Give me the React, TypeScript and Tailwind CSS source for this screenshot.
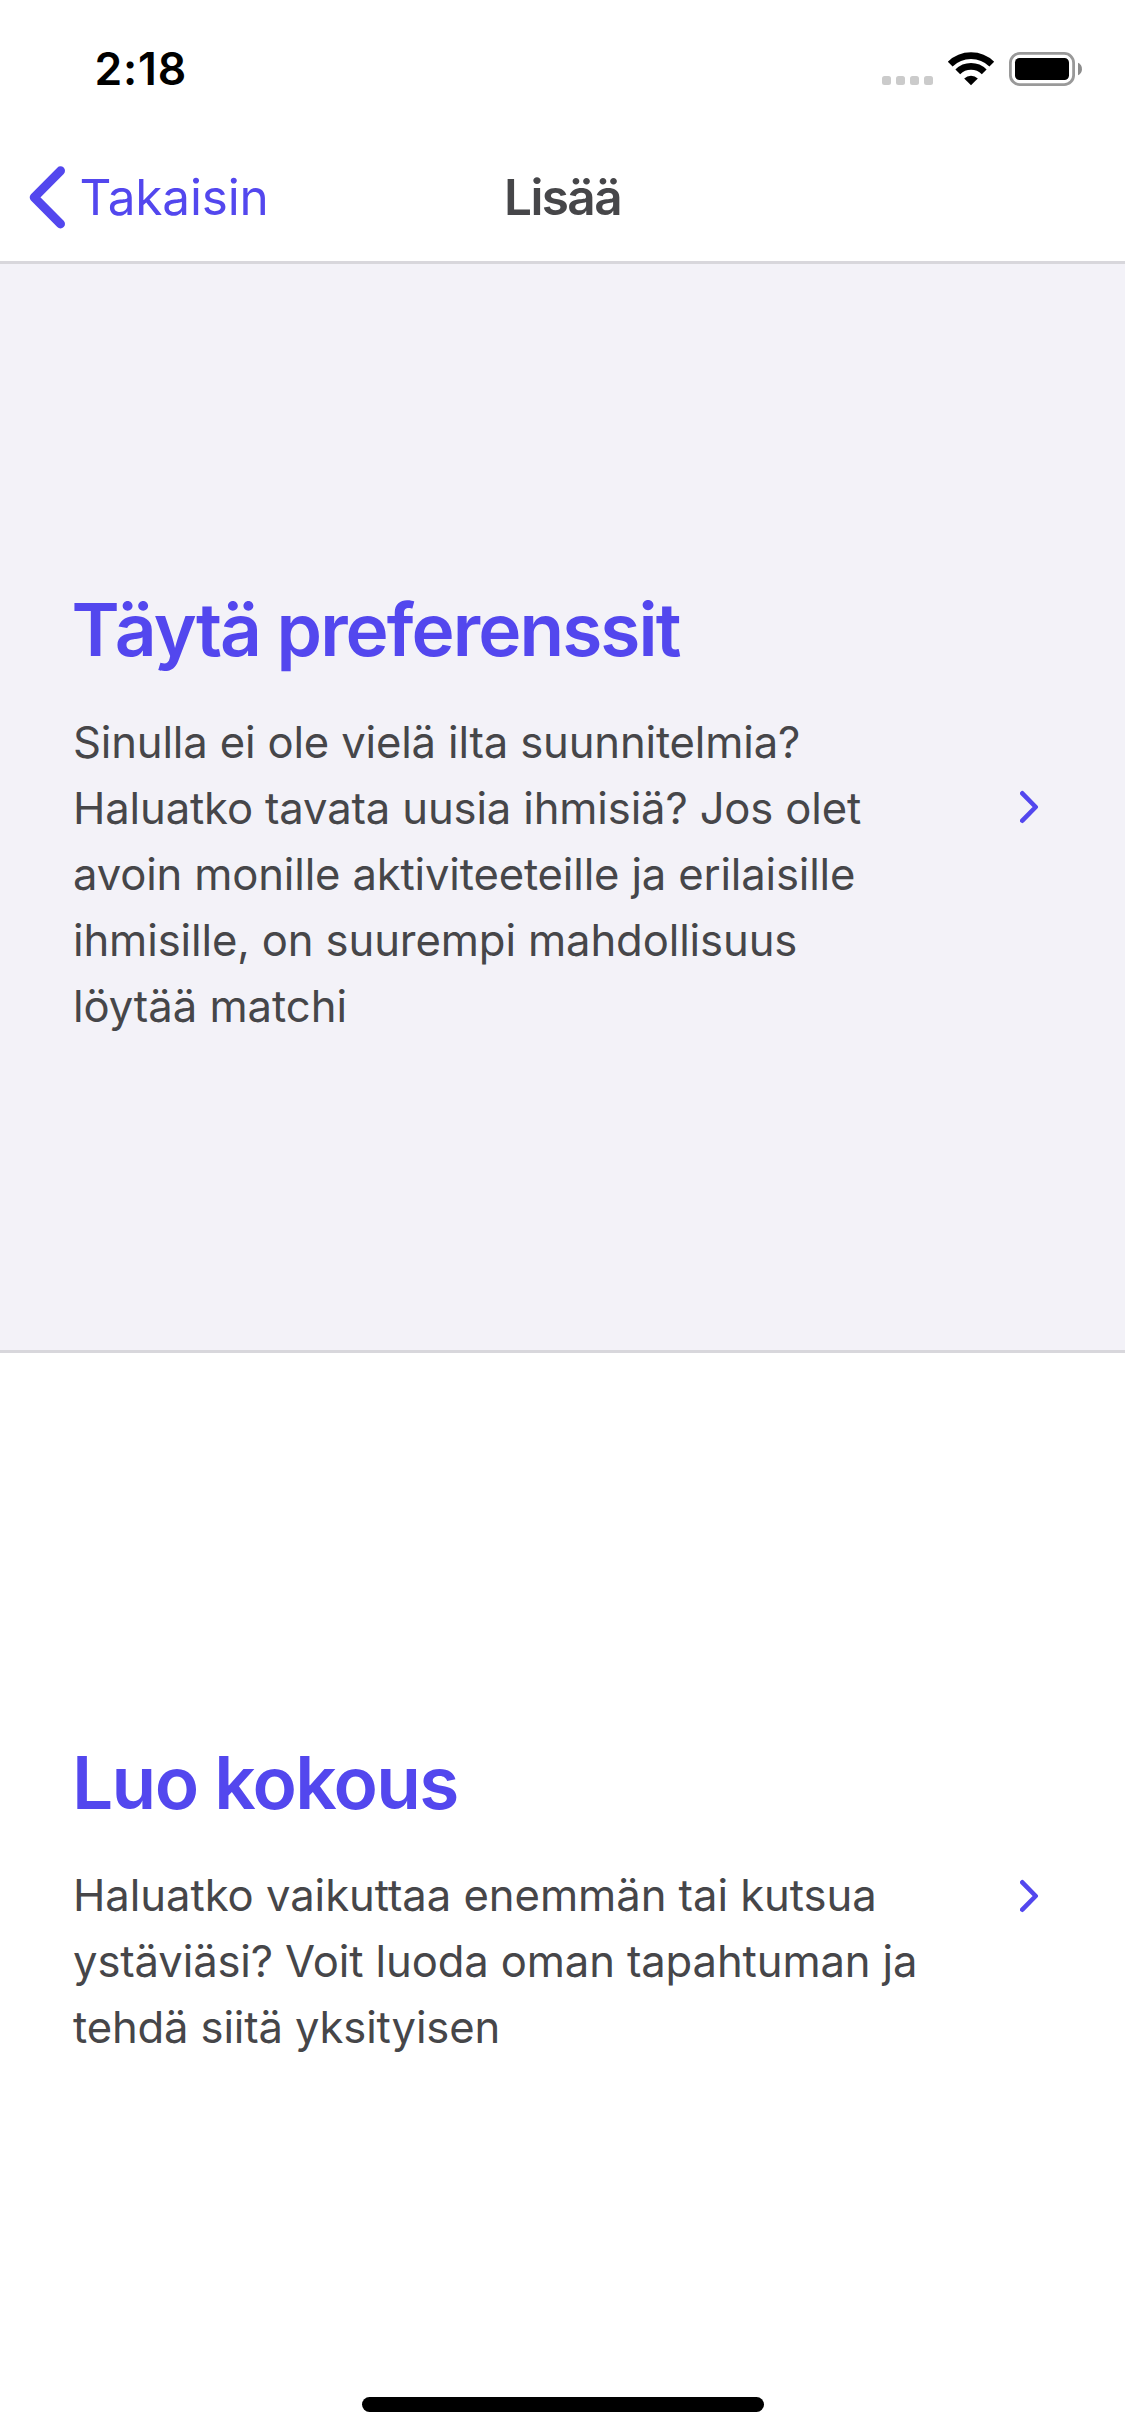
type Line = { text: string; tracking: string };
type Option = { title: Line; lines: Line[]; offset: string };

const options: Option[] = [
  {
    offset: "pt-[11px]",
    title: { text: "Täytä preferenssit", tracking: "-ml-[1.5px] tracking-[-1.93px]" },
    lines: [
      { text: "Sinulla ei ole vielä ilta suunnitelmia?", tracking: "tracking-[-0.156px]" },
      { text: "Haluatko tavata uusia ihmisiä? Jos olet", tracking: "tracking-[-0.145px]" },
      { text: "avoin monille aktiviteeteille ja erilaisille", tracking: "tracking-[-0.16px]" },
      { text: "ihmisille, on suurempi mahdollisuus", tracking: "tracking-[-0.11px]" },
      { text: "löytää matchi", tracking: "tracking-[-0.04px]" },
    ],
  },
  {
    offset: "pt-[7px]",
    title: { text: "Luo kokous", tracking: "-ml-px tracking-[-1.67px]" },
    lines: [
      { text: "Haluatko vaikuttaa enemmän tai kutsua", tracking: "tracking-[-0.04px]" },
      { text: "ystäviäsi? Voit luoda oman tapahtuman ja", tracking: "tracking-[-0.125px]" },
      { text: "tehdä siitä yksityisen", tracking: "tracking-[-0.15px]" },
    ],
  },
];

function StatusIcons() {
  return (
    <div className="flex items-start">
      <div className="mt-6 flex gap-[5px]">
        {[0, 1, 2, 3].map((i) => (
          <span key={i} className="size-[9px] rounded-[2.5px] bg-[#cbcbcb]" />
        ))}
      </div>
      <svg className="ml-[14px]" width="48" height="34" viewBox="0 0 48 34" fill="none" stroke="#000">
        <path d="M3.2 12.2 A29.6 29.6 0 0 1 44.8 12.2" strokeWidth="6.8" />
        <path d="M10.8 19.8 A18.7 18.7 0 0 1 37.2 19.8" strokeWidth="6.8" />
        <path d="M24 33.2 L17.2 26.4 A9.8 9.8 0 0 1 30.8 26.4 Z" fill="#000" stroke="none" />
      </svg>
      <svg className="ml-[14px]" width="74" height="34" viewBox="0 0 74 34" fill="none">
        <rect x="1.4" y="1.4" width="63.2" height="31.2" rx="9.4" stroke="#999" strokeWidth="2.8" />
        <rect x="6" y="6" width="54" height="22" rx="4.6" fill="#000" />
        <path d="M69 10.8 C74.3 12.8 74.3 21.2 69 23.2 Z" fill="#8c8c8c" />
      </svg>
    </div>
  );
}

function OptionCard({ option }: { option: Option }) {
  return (
    <button className="flex h-full w-full items-center justify-between pr-[85px] pl-[73px] text-left">
      <div className={option.offset}>
        <h2 className={`mb-[35px] text-[73px] leading-[90px] font-semibold whitespace-nowrap text-[#5347ee] ${option.title.tracking}`}>
          {option.title.text}
        </h2>
        <p className="text-[43.6px] leading-[66px] whitespace-nowrap text-[#464649]">
          {option.lines.map((line) => (
            <span key={line.text} className={`block ${line.tracking}`}>
              {line.text}
            </span>
          ))}
        </p>
      </div>
      <svg width="20" height="34" viewBox="0 0 20 34" fill="none" stroke="#5347ee" strokeWidth="4.6" strokeLinecap="round" strokeLinejoin="round">
        <path d="M2.3 3.3 L15.7 17 L2.3 30.7" />
      </svg>
    </button>
  );
}

export default function App() {
  return (
    <div className="flex h-[2436px] w-[1125px] flex-col overflow-hidden bg-white font-['Inter',sans-serif]">
      <div className="flex h-[132px] shrink-0 items-start justify-between pl-[94.5px] pr-[42px]">
        <span className="mt-[45px] text-[44.5px] leading-[48px] font-semibold tracking-[0.8px] text-black">2:18</span>
        <div className="mt-[52px]">
          <StatusIcons />
        </div>
      </div>

      <header className="grid h-[132px] shrink-0 grid-cols-[1fr_auto_1fr] items-center border-b-[3px] border-[#d8d7dc] pt-px">
        <button className="flex items-center pl-[29px] text-[#5347ee]">
          <svg width="37" height="63" viewBox="0 0 37 63" fill="none" stroke="currentColor" strokeWidth="9" strokeLinecap="round" strokeLinejoin="round">
            <path d="M31.5 4.8 L5.2 31.3 L31.5 57.9" />
          </svg>
          <span className="ml-[13.5px] text-[49.5px] leading-[60px] tracking-[-0.17px]">Takaisin</span>
        </button>
        <h1 className="text-[49.5px] leading-[60px] font-semibold tracking-[-1.6px] text-[#464649]">Lisää</h1>
      </header>

      <main className="flex flex-1 flex-col">
        <section className="h-[1089px] shrink-0 border-b-[3px] border-[#d8d7dc] bg-[#f3f2f8]">
          <OptionCard option={options[0]} />
        </section>
        <section className="h-[1086px] shrink-0">
          <OptionCard option={options[1]} />
        </section>
      </main>

      <div className="absolute top-[2397px] left-[362px] h-[15px] w-[402px] rounded-full bg-black" />
    </div>
  );
}
